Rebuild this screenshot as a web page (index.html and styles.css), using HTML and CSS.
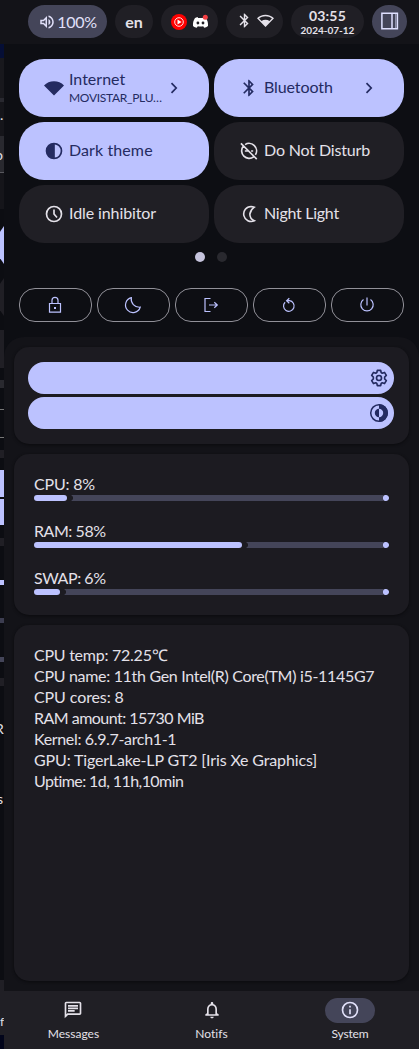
FILE: index.html
```html
<!DOCTYPE html>
<html lang="en">
<head>
<meta charset="utf-8">
<title>System sidebar</title>
<link rel="stylesheet" href="styles.css">
</head>
<body>
<header class="topbar">
  <div class="pill volume">
    <svg class="i18" viewBox="0 0 24 24"><path d="M3 9v6h4l5 5V4L7 9H3zm7-.17v6.340L7.830 13H5v-2h2.830L10 8.830zM16.500 12A4.500 4.500 0 0 0 14 7.970v8.050c1.480-.73 2.500-2.250 2.500-4.020zM14 3.230v2.060c2.890.86 5 3.540 5 6.710s-2.110 5.850-5 6.710v2.060c4.010-.91 7-4.490 7-8.770s-2.990-7.860-7-8.770z"/></svg>
    <span class="vol-text">100%</span>
  </div>
  <div class="pill lang"><span class="lang-text">en</span></div>
  <div class="pill tray">
    <svg class="music" viewBox="0 0 16 16"><circle cx="8" cy="8" r="8" fill="#f00"/><circle cx="8" cy="8" r="4.300" fill="none" stroke="#fff" stroke-width=".9"/><path d="M6.500 5.500v5L10.600 8z" fill="#fff"/></svg>
    <svg class="chat" viewBox="0 0 17 15"><path d="M5.500 3 3 4C1.300 6.500.800 9 1 12c1.300 1.100 2.500 1.500 3.800 1.800l1-1.500c2 .4 3.500.4 5.400 0l1 1.500c1.300-.3 2.600-.8 3.800-1.800.2-3-.4-5.500-2-8L11.500 3l-.6 1.100H6.100z" fill="#fff"/><circle cx="5.900" cy="9" r="1.400" fill="#201f25"/><circle cx="11" cy="9" r="1.400" fill="#201f25"/><circle cx="13.300" cy="3.200" r="2.500" fill="#f23f43"/></svg>
  </div>
  <div class="pill radios">
    <svg class="i17" viewBox="0 0 24 24"><path d="M17.710 7.710 12 2h-1v7.590L6.410 5 5 6.410 10.590 12 5 17.590 6.410 19 11 14.410V22h1l5.710-5.710-4.300-4.290 4.300-4.290zM13 5.830l1.880 1.880L13 9.590V5.830zm1.880 10.460L13 18.170v-3.760l1.880 1.880z"/></svg>
    <svg class="i17" viewBox="0 0 24 24"><path d="M12 4C7.310 4 3.070 5.900 0 8.980L12 21 24 8.980A16.880 16.880 0 0 0 12 4zM2.920 9.070C5.510 7.080 8.670 6 12 6s6.490 1.080 9.080 3.070l-3.500 3.500C16 11.500 14.100 10.900 12 10.900s-4 .6-5.580 1.670l-3.500-3.500z"/></svg>
  </div>
  <div class="pill clock"><span class="time">03:55</span><span class="date">2024-07-12</span></div>
  <div class="pill side">
    <svg class="i20" viewBox="0 0 20 20"><path d="M1.900 2.200h15.500v15.600H1.900zM12 2.200v15.600" fill="none" stroke="#dfe0ff" stroke-width="1.500"/><path d="M15.200 3h1v14h-1z" fill="#a3a5c0"/></svg>
  </div>
</header>

<div class="desktop">
  <aside class="behind">
    <i class="b1"></i><i class="b2"></i><i class="b3"></i><i class="b4"><b>.</b></i><i class="b5"><b>o</b></i><i class="b6"></i><i class="b7"></i><i class="b8"></i><i class="b9"></i><i class="b10"></i><i class="b11"></i><i class="b12"></i><i class="b13"></i><i class="b14"></i><i class="b15"></i><i class="b16"></i><i class="b17"></i><i class="b18"></i><i class="b19"></i><i class="b20"></i><i class="b21"></i><i class="b22"></i><i class="b23"><b>R</b></i><i class="b24"><b>s</b></i><i class="b25"><b>f</b></i><i class="b26"></i>
  </aside>

  <main class="panel">
    <section class="quick">
      <div class="toggles">
        <button class="toggle on">
          <svg class="i20" viewBox="0 0 24 24"><path d="M12 4C7.310 4 3.070 5.900 0 8.980L12 21 24 8.980A16.880 16.880 0 0 0 12 4z"/></svg>
          <span class="labels"><span class="l-internet">Internet</span><small>MOVISTAR_PLU…</small></span>
          <svg class="chev" viewBox="0 0 10 14"><path d="m2.500 2.200 4.700 4.800-4.700 4.800"/></svg>
        </button>
        <button class="toggle on">
          <svg class="i20" viewBox="0 0 24 24"><path d="M17.710 7.710 12 2h-1v7.590L6.410 5 5 6.410 10.590 12 5 17.590 6.410 19 11 14.410V22h1l5.710-5.710-4.300-4.290 4.300-4.290zM13 5.830l1.880 1.880L13 9.590V5.830zm1.880 10.460L13 18.170v-3.760l1.880 1.880z"/></svg>
          <span class="labels"><span class="l-bt">Bluetooth</span></span>
          <svg class="chev" viewBox="0 0 10 14"><path d="m2.500 2.200 4.700 4.800-4.700 4.800"/></svg>
        </button>
        <button class="toggle on">
          <svg class="i20" viewBox="0 0 24 24"><path d="M12 22a10 10 0 1 0 0-20 10 10 0 0 0 0 20zm1-17.930a8 8 0 0 1 0 15.860V4.070z"/></svg>
          <span class="labels"><span class="l-dark">Dark theme</span></span>
        </button>
        <button class="toggle">
          <svg class="i20" viewBox="0 0 24 24"><g fill="none" stroke="currentColor" stroke-width="2"><path d="M7.300 4.300A9 9 0 0 1 19.700 16.700M17.600 19A9 9 0 0 1 5 6.400M2.300 2.800l19 19M7 12h4.500M14.500 12H17"/></g></svg>
          <span class="labels"><span class="l-dnd">Do Not Disturb</span></span>
        </button>
        <button class="toggle">
          <svg class="i20" viewBox="0 0 24 24"><g fill="none" stroke="currentColor" stroke-width="2"><circle cx="12" cy="12" r="9"/><path d="M12 6.500V12l3.600 4.300"/></g></svg>
          <span class="labels"><span class="l-idle">Idle inhibitor</span></span>
        </button>
        <button class="toggle">
          <svg class="i20" viewBox="0 0 24 24"><path d="M14.500 3c1.350 0 2.650.28 3.850.8A12.300 12.300 0 0 0 13 12c0 3.600 2.100 6.700 5.350 8.200A9 9 0 1 1 14.500 3z" fill="none" stroke="currentColor" stroke-width="1.900"/></svg>
          <span class="labels"><span class="l-night">Night Light</span></span>
        </button>
      </div>
      <div class="dots"><i class="dot current"></i><i class="dot"></i></div>
      <div class="power">
        <button><svg viewBox="0 0 20 20"><path d="M4.500 8.500h11v8.700h-11zM7 8.500V5.300a3 3 0 0 1 6 0v3.200"/><path d="M9 12h2v2H9z" fill="currentColor" stroke="none"/></svg></button>
        <button><svg viewBox="0 0 20 20"><path d="M8.300 2.700C7.500 8 11.500 12.700 17.200 12.200A7.500 7.500 0 1 1 8.300 2.700z"/></svg></button>
        <button><svg viewBox="0 0 20 20"><path d="M9.500 3.500H4v13h5.500M8 10h8.300M13.300 7.200l3 2.800-3 2.800"/></svg></button>
        <button><svg viewBox="0 0 20 20"><path d="M6.100 7.200A5.300 5.300 0 1 0 10.500 5.700H7.600M10.300 3.200 7.600 5.700l2.700 2.500"/></svg></button>
        <button><svg viewBox="0 0 20 20"><path d="M6.500 4.600a6.200 6.200 0 1 0 7 0M10 2.500v8"/></svg></button>
      </div>
    </section>

    <section class="content">
      <div class="card sliders">
        <div class="slider"><svg class="i20" viewBox="0 0 24 24"><g fill="none" stroke="currentColor" stroke-width="2"><path d="m10 2.800-.6 2.600-1.300.8-2.700-.9L3.200 8.900l2 1.900v2.400l-2 1.900 2.200 3.600 2.700-.9 1.300.8.600 2.600h4l.6-2.600 1.300-.8 2.700.9 2.200-3.600-2-1.900v-2.400l2-1.900-2.200-3.600-2.700.9-1.300-.8-.6-2.600z" stroke-linejoin="round"/><circle cx="12" cy="12" r="3"/></g></svg></div>
        <div class="slider"><svg class="i20" viewBox="0 0 20 20"><circle cx="10" cy="10" r="8.300" fill="none" stroke="currentColor" stroke-width="1.500"/><path d="M10 1a9 9 0 0 1 0 18v-4.800a4.200 4.200 0 0 0 0-8.400zM10 5.800v8.400a4.200 4.200 0 0 1 0-8.400z"/></svg></div>
      </div>
      <div class="card meters">
        <div class="meter"><span class="m-cpu">CPU: 8%</span><div class="bar"><i class="fill" style="width:33px"></i><i class="track"></i></div></div>
        <div class="meter"><span class="m-ram">RAM: 58%</span><div class="bar"><i class="fill" style="width:208px"></i><i class="track"></i></div></div>
        <div class="meter"><span class="m-swap">SWAP: 6%</span><div class="bar"><i class="fill" style="width:26px"></i><i class="track"></i></div></div>
      </div>
      <div class="card info">
        <p><span class="s1">CPU temp: 72.25℃</span></p>
        <p><span class="s2">CPU name: 11th Gen Intel(R) Core(TM) i5-1145G7</span></p>
        <p><span class="s3">CPU cores: 8</span></p>
        <p><span class="s4">RAM amount: 15730 MiB</span></p>
        <p><span class="s5">Kernel: 6.9.7-arch1-1</span></p>
        <p><span class="s6">GPU: TigerLake-LP GT2 [Iris Xe Graphics]</span></p>
        <p><span class="s7">Uptime: 1d, 11h,10min</span></p>
      </div>
    </section>

    <nav class="tabs">
      <a class="tab"><span class="tab-icon"><svg class="i20" viewBox="0 0 24 24"><path d="M4 4h16v12H5.170L4 17.170V4m0-2c-1.100 0-1.990.9-1.990 2L2 22l4-4h14c1.100 0 2-.9 2-2V4c0-1.100-.9-2-2-2H4zm2 10h8v2H6v-2zm0-3h12v2H6V9zm0-3h12v2H6V6z"/></svg></span><span class="t-msg">Messages</span></a>
      <a class="tab"><span class="tab-icon"><svg class="i20" viewBox="0 0 24 24"><path d="M12 22c1.100 0 2-.9 2-2h-4c0 1.100.9 2 2 2zm6-6v-5c0-3.070-1.630-5.640-4.500-6.320V4c0-.83-.67-1.500-1.500-1.500s-1.500.67-1.500 1.500v.68C7.640 5.360 6 7.920 6 11v5l-2 1v2h16v-2l-2-1zm-2 1H8v-6c0-2.480 1.510-4.500 4-4.500s4 2.020 4 4.500v6z"/></svg></span><span class="t-not">Notifs</span></a>
      <a class="tab active"><span class="tab-icon"><svg class="i20" viewBox="0 0 24 24"><path d="M11 7h2v2h-2zm0 4h2v6h-2zm1-9a10 10 0 1 0 0 20 10 10 0 0 0 0-20zm0 18a8 8 0 1 1 0-16 8 8 0 0 1 0 16z"/></svg></span><span class="t-sys">System</span></a>
    </nav>
  </main>
</div>
</body>
</html>
```
FILE: styles.css
```css
* { box-sizing: border-box; }
body {
  margin: 0; width: 419px; height: 1049px; overflow: hidden;
  background: #131318; color: #e4e1e9;
  font: 16px/21px Lato, "Open Sans", sans-serif;
  font-variant-ligatures: none;
}
svg { display: block; flex: none; fill: currentColor; }
button { font: inherit; color: inherit; border: 0; margin: 0; padding: 0; }
p { margin: 0; }
span { white-space: nowrap; }
.i20 { width: 20px; height: 20px; }
.i18 { width: 18px; height: 18px; }
.i17 { width: 17px; height: 17px; }

.topbar { height: 44px; padding: 5px 12px 6px 28px; display: flex; gap: 8px; }
.pill { height: 33px; border-radius: 17px; background: #201f25; display: flex; align-items: center; justify-content: center; }
.volume { width: 79px; background: #444559; color: #e1e0f9; gap: 1px; }
.vol-text { letter-spacing: -.3px; }
.lang { width: 38px; font-weight: 700; }
.tray { width: 57px; gap: 5px; }
.music { width: 16px; height: 16px; }
.chat { width: 17px; height: 15px; }
.radios { width: 57px; gap: 4px; padding-bottom: 3px; }
.clock { width: 73px; flex-direction: column; font-weight: 700; }
.time { font-size: 14px; line-height: 15px; padding-top: 1px; letter-spacing: .15px; }
.date { font-size: 10px; line-height: 14px; }
.side { width: 35px; background: #444559; padding-bottom: 2px; }

.desktop { display: flex; height: 1005px; }
.behind { width: 4px; overflow: hidden; background: #0c0d12; display: flex; flex-direction: column; }
.behind i { display: flex; flex: none; height: 8px; font-style: normal; }
.behind b { font-weight: 400; font-size: 14px; line-height: 20px; margin-left: -5px; }
.behind .b1 { height: 14px; background: #050e35; }
.behind .b2 { height: 40px; background: #18181d; }
.behind .b3 { height: 4px; background: #292930; }
.behind .b4 { height: 34px; background: #15151a; padding-top: 3px; }
.behind .b4 b { margin-left: 0; }
.behind .b5 { height: 36px; background: #29292f; padding-top: 9px; }
.behind .b6 { height: 1px; background: #58585e; }
.behind .b7 { height: 36px; background: #15151a; }
.behind .b8 { height: 17px; }
.behind .b9 { height: 38px; background: #bcc2ff; clip-path: polygon(100% 0, 100% 100%, 0 85%, 0 15%); }
.behind .b10 { height: 14px; }
.behind .b11 { height: 38px; background: #201f25; clip-path: polygon(100% 0, 100% 100%, 0 85%, 0 15%); }
.behind .b12 { height: 64px; margin-top: 14px; background: linear-gradient(#201f25 38px, #0c0d12 38px 50px, #29292f 50px 58px, #0c0d12 58px); }
.behind .b13 { height: 29px; margin-top: 15px; border: solid #777; border-width: 1px 0; }
.behind .b14 { height: 8px; margin-top: 12px; background: #201f25; }
.behind .b15 { height: 27px; margin-top: 12px; background: #bcc2ff; }
.behind .b16 { height: 26px; margin-top: 2px; background: #bcc2ff; }
.behind .b17 { height: 8px; margin-top: 13px; background: #201f25; }
.behind .b18 { height: 5px; margin-top: 34px; background: #bcc2ff; }
.behind .b19 { height: 5px; margin-top: 33px; background: #3c3d50; }
.behind .b20 { height: 5px; margin-top: 34px; background: #444559; }
.behind .b21 { height: 8px; margin-top: 16px; background: #201f25; }
.behind .b22 { height: 33px; }
.behind .b23 { height: 70px; }
.behind .b24 { height: 191px; }
.behind .b24 b { margin-left: -3px; }
.behind .b25 { height: 55px; background: #201f25; padding-top: 32px; }
.behind .b25 b { margin-left: 0; font-size: 12px; }
.behind .b26 { height: 14px; background: #02051b; }

.panel { width: 415px; display: flex; flex-direction: column; background: #0d0e13; }
.quick { height: 293px; padding: 15px 15px 0; display: flex; flex-direction: column; }
.toggles { display: grid; grid-template-columns: 190px 190px; grid-auto-rows: 58px; gap: 5px; }
.toggle { border-radius: 25px; background: #201f25; color: #e4e1e9; display: flex; align-items: center; padding: 0 30px 0 25px; gap: 5px; text-align: left; }
.on { background: #bcc2ff; color: #242b61; }
.labels { flex: 1; min-width: 0; display: flex; flex-direction: column; line-height: 20px; padding-bottom: 2px; }
.labels small { font-size: 12px; line-height: 17px; white-space: nowrap; letter-spacing: -.3px; }
.l-bt { letter-spacing: -.1px; }
.l-dark { letter-spacing: .1px; }
.l-dnd { letter-spacing: -.15px; }
.l-night { letter-spacing: -.27px; }
.l-idle { letter-spacing: -.1px; }
.chev { width: 10px; height: 14px; fill: none; stroke: currentColor; stroke-width: 1.700; }
.dots { display: flex; justify-content: center; gap: 12px; padding: 9px 0 26px 0; margin-left: -1px; }
.dot { width: 10px; height: 10px; border-radius: 50%; background: #29292f; }
.current { background: #c6c4dd; }
.power { display: flex; gap: 5px; }
.power button { width: 73px; height: 34px; border: 1px solid #919098; border-radius: 16px; background: none; color: #bcc2ff; display: flex; align-items: center; justify-content: center; padding: 0 2px 1px 0; }
.power svg { width: 20px; height: 20px; fill: none; stroke: currentColor; stroke-width: 1.200; }

.content { flex: 1; padding: 10px; display: flex; flex-direction: column; gap: 10px; background: #131318; border-radius: 20px 20px 0 0; }
.card { background: #1c1b21; border-radius: 15px; box-shadow: 0 1px 3px #0b0b0e; }
.sliders { height: 97px; padding: 15px 15px 15px 14px; display: flex; flex-direction: column; gap: 3px; }
.slider { height: 32px; border-radius: 16px; background: #bcc2ff; color: #242b61; display: flex; align-items: center; justify-content: flex-end; padding-right: 5px; }
.meters { height: 161px; padding: 19px 20px 20px; display: flex; flex-direction: column; gap: 19px; }
.meter { height: 28px; display: flex; flex-direction: column; gap: 1px; }
.m-cpu { letter-spacing: -.2px; }
.m-ram, .m-swap { letter-spacing: -.45px; }
.bar { display: flex; gap: 3px; height: 6px; }
.fill { border-radius: 3px; background: #bcc2ff; }
.track { flex: 1; height: 6px; background: radial-gradient(circle at 0 3px, #1c1b21 2.700px, transparent 3.300px), radial-gradient(circle at calc(100% - 3px) 3px, #bcc2ff 2.800px, transparent 3.200px), #444559; border-radius: 0 3px 3px 0; }
.info { flex: 1; padding: 19px 20px 20px; }
.s1 { letter-spacing: -.25px; }
.s2 { letter-spacing: -.31px; }
.s3 { letter-spacing: -.1px; }
.s4 { letter-spacing: -.52px; }
.s5 { letter-spacing: -.34px; }
.s6 { letter-spacing: -.14px; }
.s7 { letter-spacing: -.57px; }

.tabs { height: 58px; background: #201f25; display: flex; justify-content: space-between; padding: 7px 0 0; }
.tab { width: 138px; display: flex; flex-direction: column; align-items: center; font-size: 12px; line-height: 22px; }
.tab-icon { width: 50px; height: 25px; border-radius: 13px; display: flex; align-items: center; justify-content: center; padding-bottom: 2px; }
.t-msg { padding-left: 1px; }
.t-sys { letter-spacing: -.15px; }
.active .tab-icon { background: #444559; color: #e1e0f9; }
```
